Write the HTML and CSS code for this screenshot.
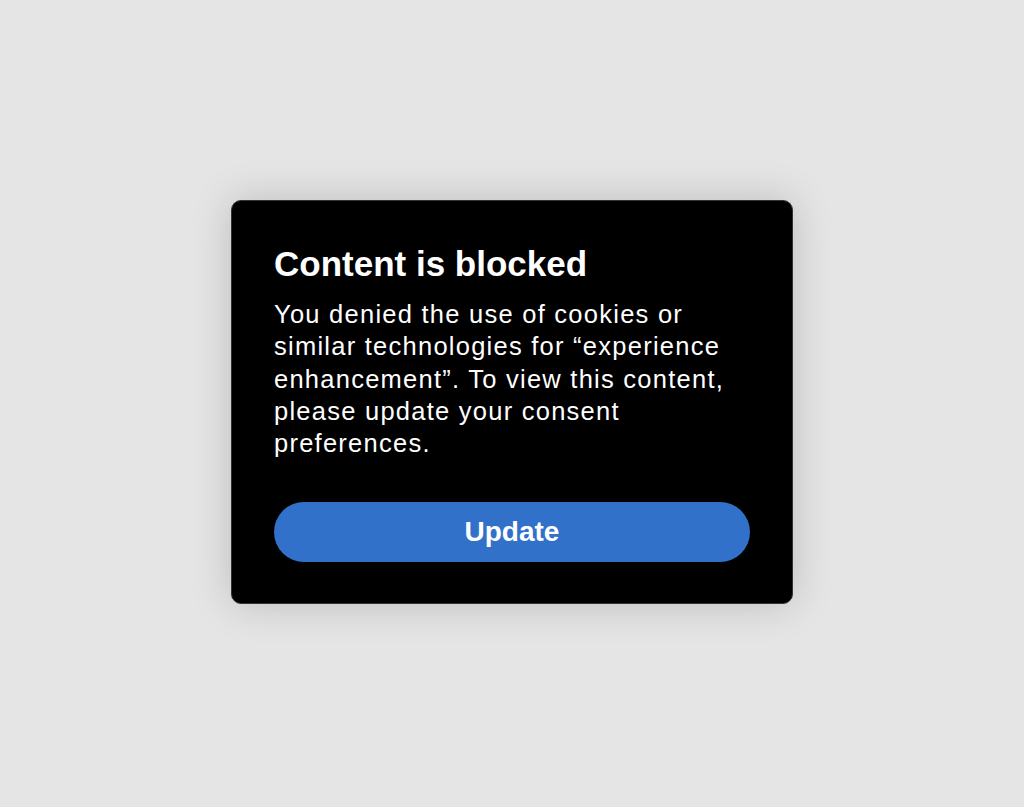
FILE: index.html
```html
<!DOCTYPE html>
<html lang="en">
<head>
<meta charset="utf-8">
<title>Content is blocked</title>
<link rel="stylesheet" href="styles.css">
</head>
<body>
<main class="stage">
  <section class="card">
    <h1 class="title">Content is blocked</h1>
    <p class="text">You denied the use of cookies or similar technologies for “experience enhancement”. To view this content, please update your consent preferences.</p>
    <button class="btn" type="button">Update</button>
  </section>
</main>
</body>
</html>
```
FILE: styles.css
```css
html, body {
  margin: 0;
  padding: 0;
  height: 100%;
}
body {
  background: #e5e5e5;
  font-family: "Liberation Sans", Arial, sans-serif;
}
.stage {
  height: 100%;
  display: flex;
  justify-content: center;
  align-items: flex-start;
  padding-top: 200px;
  box-sizing: border-box;
}
.card {
  width: 562px;
  box-sizing: border-box;
  background: #000;
  border: 1px solid #333;
  border-radius: 10px;
  padding: 43px 42px 41px 42px;
  box-shadow: 0 0 40px rgba(0, 0, 0, 0.18);
  color: #fff;
  display: flex;
  flex-direction: column;
}
.title {
  margin: 0;
  font-size: 35px;
  line-height: 40px;
  font-weight: 700;
}
.text {
  margin: 14px 0 0 0;
  font-size: 25.5px;
  line-height: 32.3px;
  font-weight: 400;
  letter-spacing: 1.25px;
}
.btn {
  margin-top: 43px;
  height: 60px;
  border: 0;
  border-radius: 30px;
  background: #3171c9;
  color: #fff;
  font-family: inherit;
  font-size: 28px;
  font-weight: 700;
  cursor: pointer;
}
```
